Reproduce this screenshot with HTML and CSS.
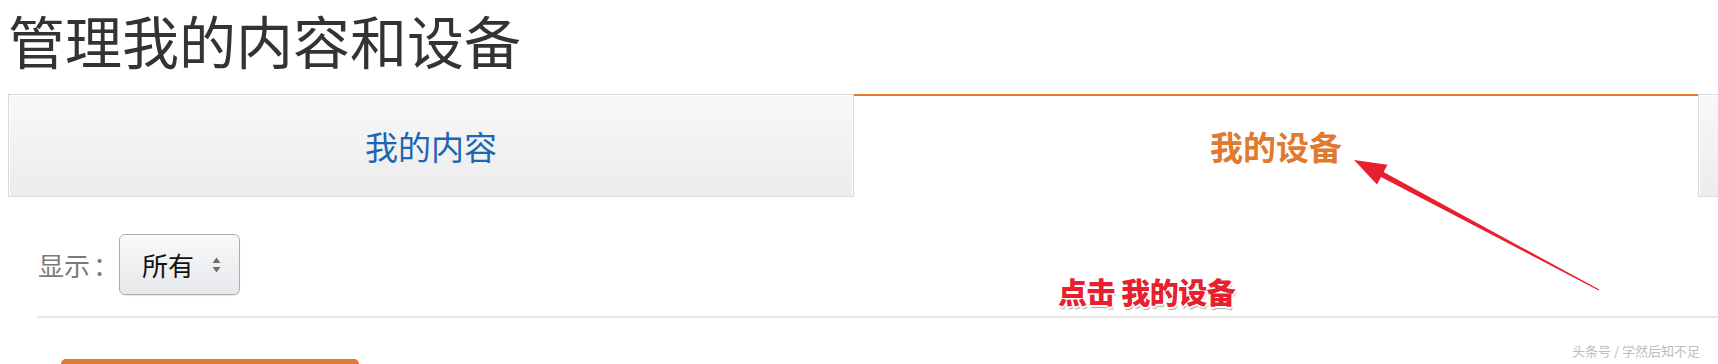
FILE: index.html
```html
<!DOCTYPE html>
<html lang="zh-CN">
<head>
<meta charset="utf-8">
<title>管理我的内容和设备</title>
<link rel="stylesheet" href="styles.css">
</head>
<body>
<div class="page">
  <h1 class="title">管理我的内容和设备</h1>
  <div class="tabs">
    <div class="tab tab-plain">我的内容</div>
    <div class="tab tab-active">我的设备</div>
    <div class="tab tab-rest"></div>
  </div>
  <div class="filter">
    <span class="filter-label">显示<span class="colon">：</span></span>
    <div class="select">
      <span class="select-text">所有</span>
      <svg class="select-arrows" width="9" height="16" viewBox="0 0 9 16">
        <path d="M4.5 0.5 L8.5 6 L0.5 6 Z" fill="#6e6e6e"/>
        <path d="M4.5 15.5 L8.5 10 L0.5 10 Z" fill="#6e6e6e"/>
      </svg>
    </div>
  </div>
  <div class="divider"></div>
  <div class="orange-btn"></div>
</div>

<div class="annotation">点击 我的设备</div>
<svg class="arrow" width="1718" height="364" viewBox="0 0 1718 364">
  <polygon fill="#e8202e" points="1599.3,289.6 1598.7,290.4 1381.0,177.0 1377.0,184.5 1354,160 1387.5,164.8 1383.6,172.0"/>
</svg>
<div class="watermark">头条号 / 学然后知不足</div>
</body>
</html>
```

FILE: styles.css
```css
html, body {
  margin: 0;
  padding: 0;
  background: #ffffff;
}
body {
  width: 1718px;
  height: 364px;
  overflow: hidden;
  position: relative;
  font-family: "Noto Sans CJK SC", "Noto Sans", "Liberation Sans", sans-serif;
}
.page {
  padding: 6px 0 0 0;
}
.title {
  margin: 0 0 0 8px;
  font-size: 57px;
  line-height: 66px;
  font-weight: 400;
  color: #333333;
}
.tabs {
  margin: 22px 0 0 8px;
  display: grid;
  grid-template-columns: 846px 844px 40px;
  height: 103px;
}
.tab {
  box-sizing: border-box;
  display: flex;
  align-items: center;
  justify-content: center;
  font-size: 33px;
}
.tab-plain {
  border: 1px solid #d9d9d9;
  background: linear-gradient(#f8f8f8, #ececec);
  box-shadow: inset 1px 1px 0 #ffffff, inset -1px 0 0 #ffffff;
  color: #1d66b3;
}
.tab-active {
  border-top: 2px solid #e07a2f;
  background: #ffffff;
  color: #e07a2f;
  font-weight: 700;
  padding-bottom: 2px;
}
.tab-rest {
  border: 1px solid #d9d9d9;
  background: linear-gradient(#f8f8f8, #ececec);
  box-shadow: inset 1px 1px 0 #ffffff;
}
.filter {
  margin: 37px 0 0 38px;
  display: flex;
  align-items: center;
  height: 61px;
}
.filter-label {
  font-size: 26px;
  color: #7a7a7a;
  width: 81px;
  white-space: nowrap;
}
.colon {
  margin-left: 3px;
}
.select {
  box-sizing: border-box;
  width: 121px;
  height: 61px;
  border: 1px solid #a9adb3;
  border-radius: 6px;
  background: linear-gradient(#f8f9fa, #e6e8eb);
  box-shadow: inset 0 1px 0 #ffffff, 0 1px 1px rgba(0,0,0,0.08);
  display: flex;
  align-items: center;
  padding-left: 22px;
}
.select-text {
  font-size: 26px;
  color: #111111;
  width: 70px;
}
.select-arrows {
  display: block;
}
.divider {
  margin: 21px 0 0 37px;
  height: 2px;
  background: #e6e6e6;
}
.orange-btn {
  margin: 41px 0 0 61px;
  width: 298px;
  height: 20px;
  background: #df7a33;
  border-radius: 5px 5px 0 0;
}
.annotation {
  position: absolute;
  left: 1058px;
  top: 275px;
  font-size: 29px;
  line-height: 32px;
  font-weight: 900;
  color: #e8202e;
  letter-spacing: -0.5px;
  white-space: nowrap;
  text-shadow:
    -1px -1px 0 #fff, 1px -1px 0 #fff, -1px 1px 0 #fff, 1px 1px 0 #fff,
    0 -2px 0 #fff, 0 2px 0 #fff, -2px 0 0 #fff, 2px 0 0 #fff,
    1px 3px 1px rgba(0,0,0,0.35);
}
.arrow {
  position: absolute;
  left: 0;
  top: 0;
  pointer-events: none;
}
.watermark {
  position: absolute;
  left: 1572px;
  top: 341px;
  font-size: 13px;
  line-height: 20px;
  color: #bdbdbd;
  font-weight: 400;
  white-space: nowrap;
  text-shadow: 0 0 1px #ffffff;
}
```
